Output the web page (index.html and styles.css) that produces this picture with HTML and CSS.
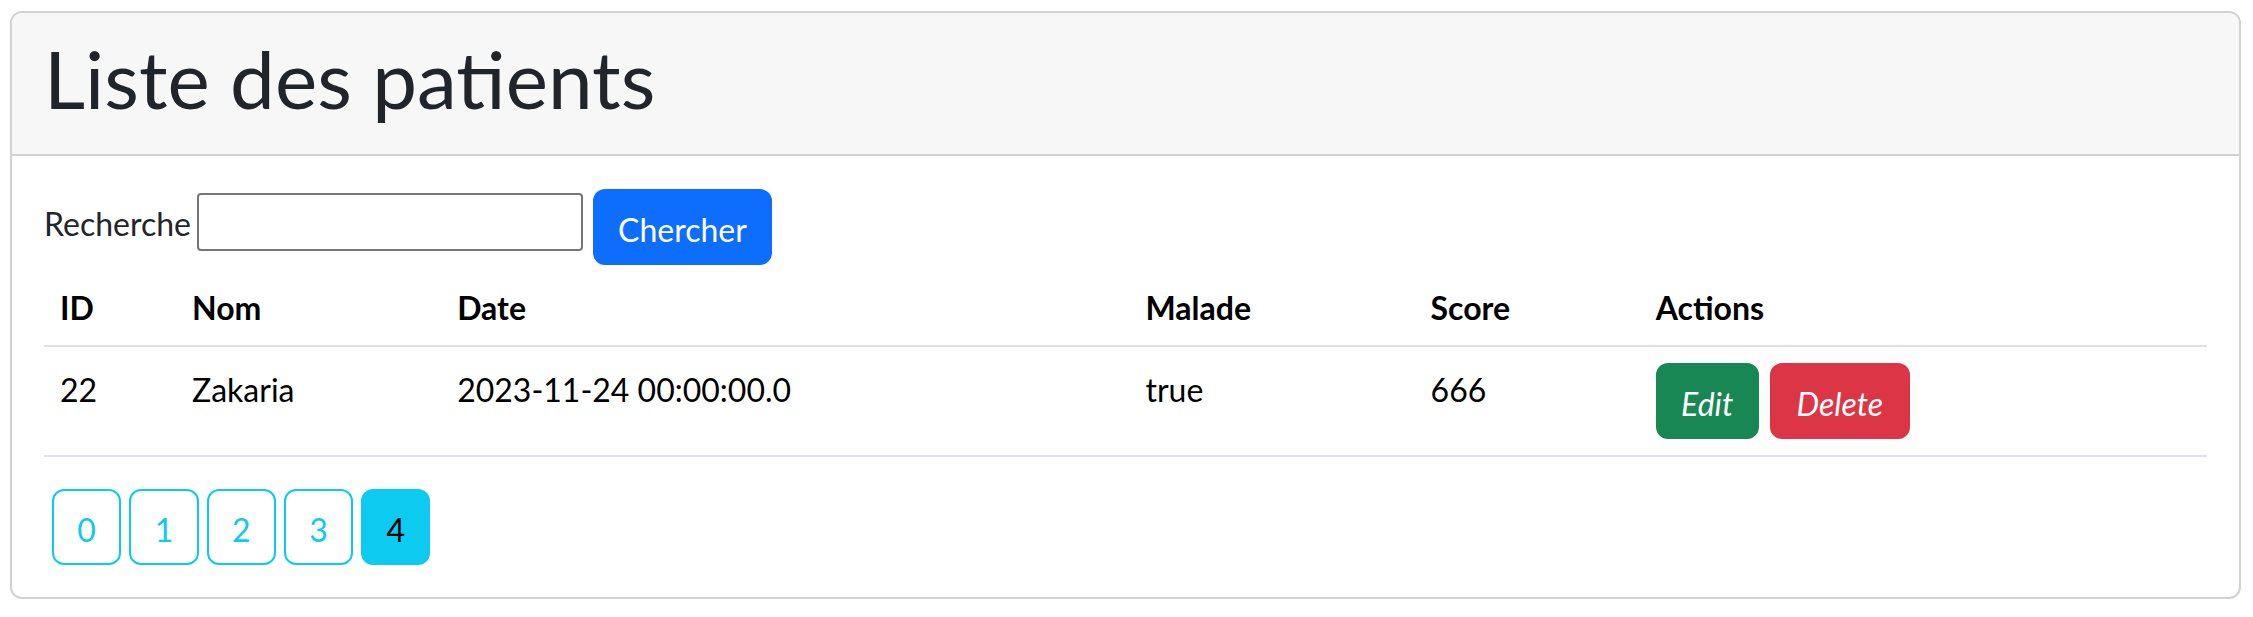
FILE: index.html
```html
<!DOCTYPE html>
<html lang="fr">
<head>
<meta charset="utf-8">
<title>Liste des patients</title>
<link rel="stylesheet" href="styles.css">
</head>
<body>
<div class="page">
  <div class="card">
    <div class="card-header">
      <h1 class="title">Liste des patients</h1>
    </div>
    <div class="card-body">
      <form class="search">
        <label class="search-label">Recherche</label>
        <input class="search-input" type="text">
        <button class="btn btn-primary btn-search" type="button">Chercher</button>
      </form>
      <table class="table">
        <thead>
          <tr>
            <th class="col-id">ID</th>
            <th class="col-nom">Nom</th>
            <th class="col-date">Date</th>
            <th class="col-malade">Malade</th>
            <th class="col-score">Score</th>
            <th class="col-actions">Actions</th>
          </tr>
        </thead>
        <tbody>
          <tr>
            <td>22</td>
            <td>Zakaria</td>
            <td>2023-11-24 00:00:00.0</td>
            <td>true</td>
            <td>666</td>
            <td class="cell-actions">
              <div class="actions">
                <a class="btn btn-success btn-edit"><i>Edit</i></a>
                <a class="btn btn-danger btn-delete"><i>Delete</i></a>
              </div>
            </td>
          </tr>
        </tbody>
      </table>
      <ul class="pages">
        <li><a class="btn btn-page">0</a></li>
        <li><a class="btn btn-page">1</a></li>
        <li><a class="btn btn-page">2</a></li>
        <li><a class="btn btn-page">3</a></li>
        <li><a class="btn btn-page active">4</a></li>
      </ul>
    </div>
  </div>
</div>
</body>
</html>
```

FILE: styles.css
```css
* {
  box-sizing: border-box;
}

body {
  margin: 0;
  background: #fff;
  color: #212529;
  font-family: "Segoe UI", Lato, "Open Sans", sans-serif;
  font-size: 32px;
  line-height: 48px;
}

.page {
  padding: 11px 12px 0 10px;
}

.card {
  border: 2px solid #d2d2d2;
  border-radius: 12px;
  background: #fff;
}

.card-header {
  background: #f7f7f8;
  border-bottom: 2px solid #d2d2d2;
  border-radius: 10px 10px 0 0;
  padding: 16px 32px;
}

.title {
  margin: 0 0 16px 0;
  padding-top: 3px;
  height: 93.4px;
  font-size: 80px;
  line-height: 93.4px;
  font-weight: 400;
  color: #212529;
  white-space: nowrap;
}

.card-body {
  padding: 32px;
}

.search {
  display: flex;
  align-items: flex-start;
  gap: 10px;
  margin: 0;
  padding-top: 1px;
}

.search-label {
  width: 143px;
  margin-top: 11px;
  line-height: 48px;
  white-space: nowrap;
}

.search-input {
  width: 386px;
  height: 58px;
  margin-top: 4px;
  padding: 2px 4px;
  border: 2px solid #767676;
  border-radius: 4px;
  font-family: inherit;
  font-size: 32px;
  line-height: 48px;
  background: #fff;
}

.btn {
  display: inline-block;
  height: 76px;
  padding: 15px 0 9px 0;
  border: 2px solid transparent;
  border-radius: 12px;
  font-family: inherit;
  font-size: 32px;
  line-height: 48px;
  text-align: center;
  text-decoration: none;
  cursor: pointer;
}

.btn-primary {
  background: #0d6efd;
  border-color: #0d6efd;
  color: #fff;
}

.btn-search {
  width: 179px;
}

.btn-success {
  background: #198754;
  border-color: #198754;
  color: #fff;
}

.btn-danger {
  background: #dc3545;
  border-color: #dc3545;
  color: #fff;
}

.btn-edit {
  width: 103px;
}

.btn-delete {
  width: 140px;
}

.table {
  width: 100%;
  table-layout: fixed;
  border-collapse: collapse;
  margin: 0 0 32px 0;
  color: #000;
}

.table th,
.table td {
  padding: 19px 16px 13px 16px;
  text-align: left;
  vertical-align: top;
  border-bottom: 2px solid #dee2e6;
  line-height: 48px;
  white-space: nowrap;
}

.table td.cell-actions {
  padding: 16px;
}

.table th {
  font-weight: 700;
}

.col-id { width: 132px; }
.col-nom { width: 265px; }
.col-date { width: 688px; }
.col-malade { width: 285px; }
.col-score { width: 225px; }
.col-actions { width: 567px; }

.actions {
  display: flex;
  gap: 11px;
}

.pages {
  display: flex;
  list-style: none;
  margin: 0;
  padding: 0;
}

.btn-page {
  width: 69.3px;
  margin-left: 8px;
  border-color: #0dcaf0;
  color: #0dcaf0;
  background: #fff;
}

.btn-page.active {
  background: #0dcaf0;
  color: #000;
}
```
